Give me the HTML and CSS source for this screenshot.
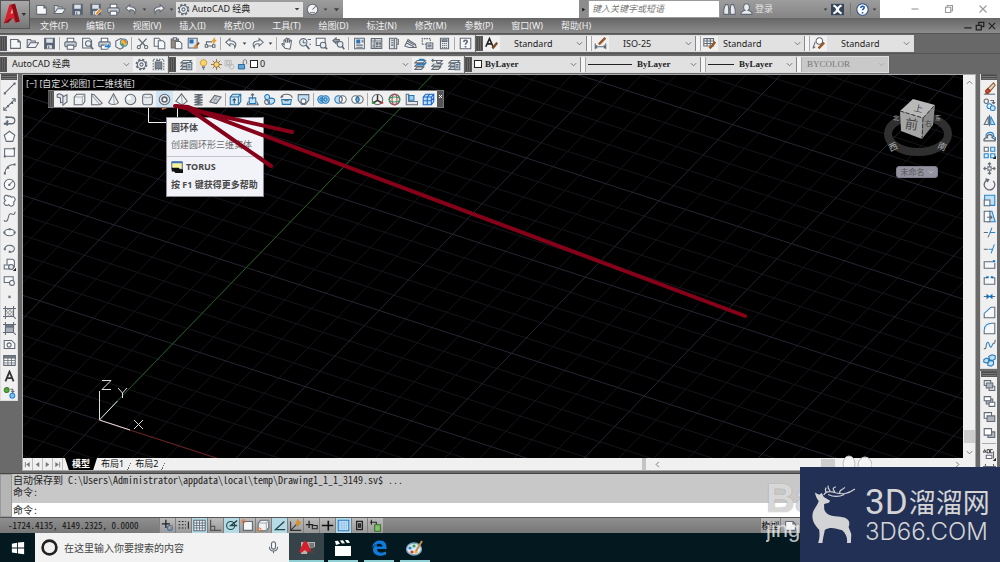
FILE: index.html
```html
<!DOCTYPE html>
<html lang="zh-CN">
<head>
<meta charset="utf-8">
<title>AutoCAD 经典</title>
<link rel="stylesheet" href="styles.css">
</head>
<body>
<svg class="defs" aria-hidden="true">
<symbol id="new" viewBox="0 0 16 16"><path fill="#f6f7f9" d="M2 3h9l3 3v8H2zM11 3v3h3"/></symbol>
<symbol id="open" viewBox="0 0 16 16"><path fill="#d5dae0" d="M1.500 13V3h4l1 2h5v3"/><path fill="#f2f4f6" d="M1.500 13l4-6h10l-4 6z"/></symbol>
<symbol id="save" viewBox="0 0 16 16"><path fill="#566275" d="M2 1.500h12v13H2z"/><path fill="#dce1e8" stroke="none" d="M4 2h8v5H4zM5 10h6v4H5z"/><path d="M7 11v3"/></symbol>
<symbol id="saveas" viewBox="0 0 16 16"><use href="#save"/><path stroke="#fff" stroke-width="4" d="M8 14l6-6"/><path stroke="#e08a2c" stroke-width="2.500" d="M9 14l5-6"/></symbol>
<symbol id="print" viewBox="0 0 16 16"><path fill="#fff" d="M4 6V1.500h8V6"/><rect x="1" y="6" width="14" height="6" rx="1.500" fill="#c8ced6"/><path fill="#fff" d="M4 10h8v5H4z"/></symbol>
<symbol id="preview" viewBox="0 0 16 16"><path fill="#f6f7f9" d="M2 1.500h8l3 3v9H2z"/><circle cx="9" cy="8" r="3.500" fill="#e7f1f8"/><path stroke-width="2" d="M11.500 11l3.500 4"/></symbol>
<symbol id="publish" viewBox="0 0 16 16"><use href="#print"/><path fill="#1b7fd0" stroke="#fff" stroke-width=".6" d="M8 10h4V7.500l4 4-4 4V13H8z"/></symbol>
<symbol id="print3d" viewBox="0 0 16 16"><path fill="#f0f2f4" d="M1 5l6-3 3 1v10l-4 2-5-3z"/><circle cx="11" cy="7" r="4.500" fill="#f3b53c" stroke="#3c8dcc"/><path stroke="#d73" stroke-width="2" d="M11 3l3 4"/><path stroke="#3ba35a" stroke-width="2" d="M8 8l3 3"/></symbol>
<symbol id="cut" viewBox="0 0 16 16"><path stroke-width="1.600" d="M3 2l8.500 9M13 2L4.500 11"/><circle cx="3.500" cy="12.500" r="2"/><circle cx="12.500" cy="12.500" r="2"/></symbol>
<symbol id="copy" viewBox="0 0 16 16"><path fill="#f6f7f9" d="M1.500 1.500H7l2 2v8H1.500z"/><path fill="#f6f7f9" d="M6.500 4.500H12l2.500 2.500v7.500h-8z"/></symbol>
<symbol id="paste" viewBox="0 0 16 16"><path fill="#9b8a72" d="M1.500 2.500h9v11h-9z"/><path fill="#dfe3e8" d="M4 1h4v3H4z"/><path fill="#f6f7f9" d="M6.500 5.500H12l2.500 2.500v6.500h-8z"/></symbol>
<symbol id="match" viewBox="0 0 16 16"><path fill="#d8e7f3" d="M1.500 1.500h11v12h-11z"/><path fill="#2d6cab" stroke="none" d="M3 3h5v5H3z"/><path stroke="#e08a2c" stroke-width="3" d="M9 13l3-3"/><path stroke="#7a4b20" stroke-width="2" d="M12 10l3-3"/></symbol>
<symbol id="block" viewBox="0 0 16 16"><path fill="#fff" d="M1.500 9.500h3v3h-3zM10.500 9.500h3v3h-3zM4.500 11h6M3 9V6h7"/><path fill="#f5a623" stroke="#d88a17" stroke-width=".7" d="M13 1l-3 4h2l-1 4 4-5h-2z"/></symbol>
<symbol id="undo" viewBox="0 0 16 16"><path fill="#f6f7f9" d="M6 2L1 6.500 6 11V8.500c4-.6 6 .8 6 4.500 3-4 1-8.500-6-8.500z"/></symbol>
<symbol id="redo" viewBox="0 0 16 16"><path fill="#f6f7f9" d="M10 2l5 4.500L10 11V8.500c-4-.6-6 .8-6 4.500-3-4-1-8.500 6-8.500z"/></symbol>
<symbol id="tri" viewBox="0 0 16 16"><path fill="#3a3f46" stroke="none" d="M2 5h12l-6 7z"/></symbol>
<symbol id="pan" viewBox="0 0 16 16"><path fill="#f6f7f9" d="M5 14C3 11 1 10 1 8.500c1-1 2 0 3 1L3.500 4c1-1.300 1.600 0 2 1L6 7V2c1-1.300 2-.5 2 .5V7l.5-4.500c1-1 2-.2 1.700.8L10 7l1.500-3c1.500-.5 1.500.7 1.200 1.700L12 11l-1 4z"/></symbol>
<symbol id="zoomrt" viewBox="0 0 16 16"><circle cx="6.500" cy="6.500" r="4.500" fill="#e6eef4"/><path stroke-width="2" d="M10 10l4 5"/><path d="M6.500 4v3h3M12 3h4M14 9h2"/></symbol>
<symbol id="zoomwin" viewBox="0 0 16 16"><path d="M1.500 1.500h11v9h-11z" fill="#f6f7f9"/><circle cx="10" cy="10" r="3.500" fill="#e6eef4"/><path stroke-width="2" d="M12.500 12.500L15 15"/></symbol>
<symbol id="zoomprev" viewBox="0 0 16 16"><path fill="#9aa1aa" d="M5 1L1 4.500 5 8V6h4V3H5z"/><circle cx="10" cy="9" r="3.500" fill="#e6eef4"/><path stroke-width="2" d="M12.500 11.500L15 15"/></symbol>
<symbol id="props" viewBox="0 0 16 16"><path fill="#f6f7f9" d="M2 1.500h12v13H2z"/><path fill="#3172b0" stroke="none" d="M4 3h5v5H4z"/><path d="M4 10h8M4 12.500h8M10.500 4H13M10.500 6H13"/></symbol>
<symbol id="grid" viewBox="0 0 16 16"><path fill="#f6f7f9" d="M1.500 2h13v12h-13z"/><path d="M1.500 5h13M1.500 8h13M1.500 11h13M6 2v12M10.500 2v12"/></symbol>
<symbol id="sgrid" viewBox="0 0 16 16"><path fill="#e6f3f8" d="M1 1.500h14v13H1z"/><path stroke-width="1" d="M1 5h14M1 8h14M1 11h14M4.500 2v12M8 2v12M11.500 2v12"/></symbol>
<symbol id="design" viewBox="0 0 16 16"><path fill="#f6f7f9" d="M1.500 2h13v12h-13z"/><path d="M6 2v12M1.500 5h13M3 7.500h2M3 10h2M3 12h2"/><path fill="#7b8591" d="M8 7h2v2H8zM12 7h1v2h-1zM8 11h2v1H8zM12 11h1v1h-1z"/></symbol>
<symbol id="palette" viewBox="0 0 16 16"><path fill="#dfe3e8" d="M3 1.500h9v13H3z"/><path d="M9 2v12M5 4h3M5 7h3M5 10h3M13 3h1v6h-2"/></symbol>
<symbol id="sheet" viewBox="0 0 16 16"><path fill="#e8ebee" d="M1 11l4-8 9 6 1 4H6zM3 7l9 5M4 5l9 5"/></symbol>
<symbol id="markup" viewBox="0 0 16 16"><path stroke-dasharray="2 1" d="M1.500 9V2h10v5M1.500 9H6"/><path fill="#dfe3e8" d="M6.500 7.500h8v7h-8zM8 10h5M8 12h5"/></symbol>
<symbol id="calc" viewBox="0 0 16 16"><path fill="#e8ebee" d="M3 1.500h10v13H3z"/><path fill="#9aa3ad" d="M5 3.500h6v2H5z"/><path stroke-dasharray="1.500 1" d="M5 8h6M5 10.500h6M5 13h6"/></symbol>
<symbol id="help" viewBox="0 0 16 16"><path fill="#f6f7f9" d="M1.500 1.500h13v13h-13z"/><path stroke-width="2" d="M6 6c0-3 4.500-2.500 4 0-.3 1.500-2 1.500-2 3.500M8 11v2"/></symbol>
<symbol id="gear" viewBox="0 0 16 16"><circle cx="8" cy="8" r="6" stroke-width="2.500" stroke-dasharray="2.700 2"/><circle cx="8" cy="8" r="5" fill="#f2f4f6"/><circle cx="8" cy="8" r="2"/></symbol>
<symbol id="wsave" viewBox="0 0 16 16"><path stroke-dasharray="2 1.500" d="M1.500 1.500h13v13h-13z"/><path fill="#7e8894" d="M4 5h8v8H4zM5 3h5"/></symbol>
<symbol id="layer" viewBox="0 0 16 16"><path fill="#eef0f2" d="M4 3h10l-3 3H1zM4 7h10l-3 3H1zM4 11h8l-3 3H1z"/></symbol>
<symbol id="layerprop" viewBox="0 0 16 16"><use href="#layer"/><path fill="#cfe4f5" d="M8.500 5.500h6v9h-6zM10 8h3M10 10h3M10 12h3"/></symbol>
<symbol id="layerblue" viewBox="0 0 16 16"><use href="#layer"/><path stroke="#2986cc" stroke-width="2" d="M3 8h9l3-3M6 2h7"/></symbol>
<symbol id="layerprev" viewBox="0 0 16 16"><use href="#layer"/><path fill="#f0f0f0" stroke="none" d="M0 0h7v7H0z"/><path d="M1 3h6v3M3 1L1 3l2 2"/></symbol>
<symbol id="bulb" viewBox="0 0 16 16"><path fill="#fbd36b" stroke="#c58b25" d="M6 10C1 6 4 1 8 1s7 5 2 9z"/><path stroke-width="2" d="M6 12h4M7 14.500h2"/></symbol>
<symbol id="sun" viewBox="0 0 16 16"><path stroke="#8d6a35" d="M8 0v16M0 8h16M2.500 2.500l11 11M13.500 2.500l-11 11"/><circle cx="8" cy="8" r="4" fill="#fbd36b" stroke="#8d6a35"/></symbol>
<symbol id="frozen" viewBox="0 0 16 16"><g stroke="#b5b5b5"><path d="M1.500 2h9v8h-9zM4 4h4v4H4z"/><circle cx="11" cy="11" r="3.500"/></g></symbol>
<symbol id="unlock" viewBox="0 0 16 16"><path d="M9 8V4c0-4 5-4 5 0v3"/><path fill="#5aa7dd" stroke="#24608d" d="M2 8h9v6.500H2z"/></symbol>
<symbol id="chev" viewBox="0 0 16 16"><path stroke-width="2" d="M2 5l6 6 6-6"/></symbol>
<symbol id="tstyle" viewBox="0 0 16 16"><path stroke="#222" stroke-width="2" d="M1 12L5.500 2 10 12M3 8.500h5"/><path stroke="#7a4b20" stroke-width="3" d="M9 14l2-2 4-5"/></symbol>
<symbol id="dstyle" viewBox="0 0 16 16"><path d="M1.500 8v7M14.500 8v7M2 12h12M4 10l-2 2 2 2M12 10l2 2-2 2"/><path stroke="#9a5626" stroke-width="3" d="M6 9l3-3 5-5"/></symbol>
<symbol id="tbstyle" viewBox="0 0 16 16"><path fill="#fff" d="M1 2h12v9H1zM1 5h12M1 8h12M5 2v9M9 2v9"/><path stroke="#9a5626" stroke-width="3" d="M8 14l3-3 4-5"/></symbol>
<symbol id="mlstyle" viewBox="0 0 16 16"><path fill="#fff" d="M1 14l3-8M1 14l3-2"/><circle cx="9" cy="5" r="4" fill="#fff"/><path stroke="#9a5626" stroke-width="3" d="M8 14l3-3 4-4"/></symbol>
<symbol id="line" viewBox="0 0 16 16"><path d="M2 14L14 2"/><path stroke-width="2.500" d="M1 14h2.500M13 2h2.500"/></symbol>
<symbol id="xline" viewBox="0 0 16 16"><path d="M1 15L15 1M1 11v4h4M11 1h4v4"/><path stroke-width="2.500" d="M5 10h2.500M10 6h2.500"/></symbol>
<symbol id="pline" viewBox="0 0 16 16"><path stroke-width="1.600" d="M4 4h6c6 0 6 8 0 8H2"/><path stroke-width="2.500" d="M3 4h2.500M1 12h2.500M6 8l-2 4 2 2"/></symbol>
<symbol id="polygon" viewBox="0 0 16 16"><path fill="#f8f9fa" d="M8 1.500l6.500 5L12 14H4L1.500 6.500z"/></symbol>
<symbol id="rect" viewBox="0 0 16 16"><path fill="#f8f9fa" d="M2 3.500h12v9H2z"/><path stroke-width="2.500" d="M1 13h2.500M12.500 3h2.500"/></symbol>
<symbol id="arc" viewBox="0 0 16 16"><path d="M2 14C3 8 7 3 14 3"/><path stroke-width="2.500" d="M1 14h2.500M5 7h2.500M13 3h2.500"/></symbol>
<symbol id="circle" viewBox="0 0 16 16"><circle cx="8" cy="8" r="6.500" fill="#f8f9fa"/><path d="M8 8l4-4"/><path stroke-width="2.500" d="M6.500 8.500H9"/></symbol>
<symbol id="cloud" viewBox="0 0 16 16"><path fill="#f8f9fa" d="M7 3c-5-4-7 2-4 5-4 3 0 8 4 5 3 4 8 1 6-3 4-3 1-8-3-6-1-2-2-2-3-1z"/></symbol>
<symbol id="spline" viewBox="0 0 16 16"><path d="M1 13c6 4 5-6 7-8s6 4 7-3"/></symbol>
<symbol id="ellipse" viewBox="0 0 16 16"><ellipse cx="8" cy="8" rx="6.500" ry="4" fill="#f8f9fa"/><path stroke-width="2.500" d="M.5 8H3M13 8h2.500M7 4h2.500"/></symbol>
<symbol id="ellarc" viewBox="0 0 16 16"><path d="M2 9c0-7 13-6 12 0-1 3-4 4-6 3"/><path stroke-width="2.500" d="M1 9h2.500M7 12h2.500"/></symbol>
<symbol id="insert" viewBox="0 0 16 16"><path fill="#f8f9fa" d="M5 1.500h7l2 2V11H5z"/><path fill="#f8f9fa" d="M1.500 8.500h6v5h-6z"/><circle cx="10" cy="11" r="3" fill="#e9ecef"/><path fill="#222" stroke="none" d="M16 12v4h-4z"/></symbol>
<symbol id="mkblock" viewBox="0 0 16 16"><path fill="#f8f9fa" d="M1.500 3.500h11v7h-11z"/><circle cx="11" cy="11" r="3" fill="#f8f9fa"/></symbol>
<symbol id="point" viewBox="0 0 16 16"><path fill="#778" stroke="none" d="M6.500 7h3v3h-3z"/></symbol>
<symbol id="hatch" viewBox="0 0 16 16"><path d="M3 0v16M13 0v13M0 3h16M0 13h13M12 12l4 4"/><path stroke-width=".8" d="M3 7l4-4M3 11l8-8M5 13l8-8M9 13l4-4M3 5l8 8M6 3l7 7"/></symbol>
<symbol id="gradient" viewBox="0 0 16 16"><path fill="#a9afb6" stroke="none" d="M3 3h10v10H3z"/><path fill="#6d757f" stroke="none" d="M3 3h10v4H3z"/><path d="M3 0v16M13 0v13M0 3h16M0 13h13M12 12l4 4"/></symbol>
<symbol id="region" viewBox="0 0 16 16"><path fill="#f8f9fa" d="M1.500 3h9l4 4v6h-13z"/><circle cx="7.500" cy="8.500" r="2.500"/></symbol>
<symbol id="table" viewBox="0 0 16 16"><path fill="#fff" d="M1 2h14v12H1z"/><path fill="#77808b" d="M1 2h14v3H1z"/><path stroke-width="1" d="M1 8h14M1 11h14M6 5v9M10.500 5v9"/></symbol>
<symbol id="text" viewBox="0 0 16 16"><path stroke="#333" stroke-width="2.200" d="M3 14L8 2l5 12M4.500 10h7"/></symbol>
<symbol id="addsel" viewBox="0 0 16 16"><circle cx="4.500" cy="5" r="3" fill="#58a63f" stroke="#3a7d27"/><circle cx="11.500" cy="12" r="3" fill="#79c2ef" stroke="#2986cc"/><path d="M9 4h3v4M10 6l2 2 2-2"/></symbol>
<symbol id="erase" viewBox="0 0 16 16"><path d="M1 15h14"/><path fill="#e8d9c4" stroke="#86562f" d="M6 8l7-7 2 3-6 7z"/><path fill="#c6502b" stroke="#963216" d="M6 8l3 3-3 3H4l-1-3z"/></symbol>
<symbol id="mcopy" viewBox="0 0 16 16"><circle cx="4" cy="4" r="2.700"/><path d="M9 3h4v4M11 5l2 2 2-2"/><g stroke="#2986cc"><circle cx="8" cy="10" r="3"/><circle cx="12" cy="12.500" r="3" fill="#cfe6f7"/></g></symbol>
<symbol id="mirror" viewBox="0 0 16 16"><path fill="#e9ecef" d="M6.500 3v10h-5z"/><path fill="#bfe0f7" stroke="#2986cc" d="M9.500 3v10h5z"/><path d="M8 1v14"/></symbol>
<symbol id="offset" viewBox="0 0 16 16"><path stroke="#2986cc" stroke-width="1.600" d="M4 9C2 2 14 0 13 8c3 1 3 3 2 4"/><path stroke-width="1.600" fill="#e9ecef" d="M1.500 13.500c-1-3 1-4 4-4-2-4 6-6 6-1-2 2 4 1 3.500 5z"/></symbol>
<symbol id="array" viewBox="0 0 16 16"><path fill="#fff" d="M1.500 1.500h5v5h-5z"/><path fill="#d6ebf9" stroke="#2986cc" d="M9.500 1.500h5v5h-5zM1.500 9.500h5v5h-5zM9.500 9.500h5v5h-5z"/><path fill="#222" stroke="none" d="M16 12v4h-4z"/></symbol>
<symbol id="move" viewBox="0 0 16 16"><path fill="#fff" d="M6 6h4v4H6z"/><path d="M8 1v4M8 11v4M1 8h4M11 8h4M6 3l2-2 2 2M6 13l2 2 2-2M3 6L1 8l2 2M13 6l2 2-2 2"/></symbol>
<symbol id="rotate" viewBox="0 0 16 16"><path stroke-width="1.600" d="M12.500 3.500A6.500 6.500 0 1 1 6 2M3 1l4 1-2 3"/></symbol>
<symbol id="scale" viewBox="0 0 16 16"><path fill="#bfe0f7" stroke="#2986cc" d="M2 1.500h12.500V14H2z"/><path fill="#f6f7f9" d="M1.500 7.500h7v7h-7z"/></symbol>
<symbol id="stretch" viewBox="0 0 16 16"><path fill="#bfe0f7" stroke="#2986cc" d="M8 1.500h3l4 13H6z"/><path fill="#f6f7f9" d="M1.500 1.500h7v13h-7z"/><path d="M5 9h6M9 7l2 2-2 2"/></symbol>
<symbol id="trim" viewBox="0 0 16 16"><path d="M1 8h5M6 14l2-4"/><path stroke="#2986cc" d="M8 8h7M8 10l3-8"/></symbol>
<symbol id="extend" viewBox="0 0 16 16"><path d="M1 9h5"/><path stroke="#2986cc" d="M7 9h5M10 14l4-11"/></symbol>
<symbol id="breakpt" viewBox="0 0 16 16"><path fill="#f6f7f9" d="M12 4.500H1.500v8h13V6"/><path stroke="#1270c0" stroke-width="2.500" d="M12 4h3"/></symbol>
<symbol id="break" viewBox="0 0 16 16"><path fill="#f6f7f9" d="M5 4.500H1.500v8h13v-8H11"/><path stroke="#1270c0" stroke-width="2.500" d="M4 4h3M9.500 4h3"/></symbol>
<symbol id="join" viewBox="0 0 16 16"><path d="M1 8h14"/><path fill="#1270c0" stroke="#1270c0" d="M5 6l2.500 2L5 10zM11 6L8.500 8l2.500 2z"/></symbol>
<symbol id="chamfer" viewBox="0 0 16 16"><path fill="#f6f7f9" d="M1.500 9v5.500h13v-13H10"/><path stroke="#2986cc" d="M1.500 9L10 1.500"/></symbol>
<symbol id="fillet" viewBox="0 0 16 16"><path fill="#f6f7f9" d="M1.500 10v4.500h13v-13H11"/><path stroke="#2986cc" d="M1.500 10c0-6 4-8.500 9.500-8.500"/></symbol>
<symbol id="blend" viewBox="0 0 16 16"><path d="M1 13c2 1 3-1 3-4M12 7c3 0 3-3 3-5"/><path stroke="#2986cc" d="M4 9c1-6 3-4 4 0s3 2 4-2"/></symbol>
<symbol id="explode" viewBox="0 0 16 16"><g fill="#bfe0f7" stroke="#2478b5"><path d="M1 7l3-2 3 1v4l-3 1-3-1zM7 3l4-2 4 1v4l-3 2-4-1zM6 10l3-2 4 1v4l-3 2-4-1z"/></g></symbol>
<symbol id="front" viewBox="0 0 16 16"><path fill="#fff" d="M1.500 2h8v6h-8zM7.500 9h7v5h-7z"/><path fill="#aeb4bb" d="M4 5h8v6H4z"/></symbol>
<symbol id="back" viewBox="0 0 16 16"><path fill="#aeb4bb" d="M4 5h8v6H4z"/><path fill="#fff" d="M1.500 2h8v5h-8zM7.500 9h7v5h-7z"/></symbol>
<symbol id="above" viewBox="0 0 16 16"><path fill="#fff" d="M1.500 2h9v7h-9z"/><path fill="#aeb4bb" d="M5 6h9.500v7H5z"/></symbol>
<symbol id="under" viewBox="0 0 16 16"><path fill="#aeb4bb" d="M6 6h8.500v7H6z"/><path fill="#fff" d="M1.500 2h9v8h-9z"/></symbol>
<symbol id="annot" viewBox="0 0 16 16"><path stroke="#222" stroke-width="1" d="M0 6l2-4 2 4M1 5h2M5 2v4h3V2zM12 2H9v4h3"/><path fill="#fff" d="M4 9h7v4H4zM13 4v9"/><path fill="#222" stroke="none" d="M16 12v4h-4z"/></symbol>
<symbol id="polysolid" viewBox="0 0 16 16"><path fill="#e3e7eb" d="M1.500 2l3-1 4 2v8l-3 1V6l-4-1zM8.500 5l5-3v9l-5 4z"/></symbol>
<symbol id="box" viewBox="0 0 16 16"><path fill="#eff1f3" d="M1.500 5l3-3.500h10v9l-3 4h-10z"/><path stroke="#a4abb3" d="M11.500 14V5h-9M11.500 5l3-3"/></symbol>
<symbol id="wedge" viewBox="0 0 16 16"><path fill="#eff1f3" d="M2 1.500v13h10l3-2L5 2z"/><path stroke="#a4abb3" d="M2.500 3l9.500 11"/></symbol>
<symbol id="cone" viewBox="0 0 16 16"><path fill="#eff1f3" d="M8 1l6 11c-3 3-9 3-12 0z"/><path stroke="#a4abb3" d="M8 3l1 11"/></symbol>
<symbol id="sphere" viewBox="0 0 16 16"><circle cx="8" cy="8" r="6.500" fill="#dfe4e9"/><circle cx="6" cy="6" r="2.500" fill="#fff" stroke="none"/></symbol>
<symbol id="cyl" viewBox="0 0 16 16"><rect x="2" y="1.500" width="12" height="13" rx="3" fill="#e7eaed"/><path stroke="#a4abb3" d="M3 4.500c3 1.500 7 1.500 10 0"/></symbol>
<symbol id="torus" viewBox="0 0 16 16"><circle cx="8" cy="8" r="6.500" fill="#e4e8ec"/><circle cx="8" cy="8" r="3" fill="#fff" stroke-width="2"/></symbol>
<symbol id="pyramid" viewBox="0 0 16 16"><path fill="#eff1f3" d="M8 1l7 9-6 5-8-5z"/><path stroke="#a4abb3" d="M8 3l1 11"/></symbol>
<symbol id="helix" viewBox="0 0 16 16"><path stroke-width="1.500" d="M3 2h10L3 5h10L3 8.500h10L3 11.500h10L3 14.500h10"/></symbol>
<symbol id="planar" viewBox="0 0 16 16"><path fill="#cdd1d6" d="M1 11l6-8 8 2-6 8z"/><path stroke="#8d959e" stroke-width="1" d="M4 7l8 2M10 4l-5 8"/></symbol>
<symbol id="extrude" viewBox="0 0 16 16"><path fill="#bfe0f7" stroke="#24719f" d="M1.500 5l3-3.500h10v9l-3 4h-10zM11.500 14V5h-10M11.500 5l3-3.500"/><path stroke="#1b4f74" d="M6.500 13V7M4.500 9l2-2 2 2"/></symbol>
<symbol id="presspull" viewBox="0 0 16 16"><path fill="#bfe0f7" stroke="#2478b5" d="M4 6h8v7H4z"/><path d="M1 14.500h14l-2-4M1 14.500l2-4M8 8V1M6 3l2-2 2 2"/></symbol>
<symbol id="sweep" viewBox="0 0 16 16"><path fill="#bfe0f7" stroke="#2478b5" d="M2 4c4-5 8 0 5 3 5-2 9 1 7 4s-6 4-7 1c-1-4-5-3-5-8z"/><circle cx="5" cy="11" r="3"/></symbol>
<symbol id="revolve" viewBox="0 0 16 16"><path fill="#bfe0f7" stroke="#2478b5" d="M2 8h12l-1 6H3z"/><path d="M1 6c1-6 13-6 14 0M1 6l3-2M5 8c0 2 6 2 6 0"/></symbol>
<symbol id="loft" viewBox="0 0 16 16"><path fill="#bfe0f7" d="M1.500 2h13v7L10 14H6L1.500 9z"/><circle cx="8" cy="10" r="3" fill="#fff"/></symbol>
<symbol id="union" viewBox="0 0 16 16"><g fill="#9fd1f3" stroke="#2478b5"><circle cx="5.500" cy="8" r="4.500"/><circle cx="10.500" cy="8" r="4.500"/></g><circle cx="5.500" cy="8" r="2" stroke="#2478b5"/><circle cx="10.500" cy="8" r="2" stroke="#2478b5"/></symbol>
<symbol id="subtract" viewBox="0 0 16 16"><circle cx="10.500" cy="8" r="4.500" fill="#fff"/><circle cx="5.500" cy="8" r="4.500" fill="#b9def6" stroke="#2478b5"/><path fill="#fff" d="M8.500 4.200a4.500 4.500 0 0 0 0 7.600c2-2 2-5.600 0-7.600z"/></symbol>
<symbol id="intersect" viewBox="0 0 16 16"><circle cx="5.500" cy="8" r="4.500" fill="#fff"/><circle cx="10.500" cy="8" r="4.500"/><path fill="#62b1e6" stroke="#2478b5" d="M8 4.500c2 2 2 5 0 7-2-2-2-5 0-7z"/></symbol>
<symbol id="move3d" viewBox="0 0 16 16"><circle cx="8" cy="8" r="6.500"/><path stroke-width="1.800" stroke="#333" d="M8 2v7l-5 3M8 9l5 3"/><path stroke-width="2.500" stroke="#c33" d="M12 12h3"/><path stroke-width="2.500" stroke="#292" d="M1 12h3"/></symbol>
<symbol id="rot3d" viewBox="0 0 16 16"><circle cx="8" cy="8" r="6.500" stroke-width="1.800"/><ellipse cx="8" cy="8" rx="3" ry="6.500" stroke="#c44"/><ellipse cx="8" cy="8" rx="6.500" ry="3" stroke="#3a9a5b"/></symbol>
<symbol id="align3d" viewBox="0 0 16 16"><path fill="#e4e8ec" d="M1.500 1.500h3v9h11v4h-14z"/><path fill="#9fd1f3" stroke="#2478b5" d="M5 3h6v6H5z"/></symbol>
<symbol id="array3d" viewBox="0 0 16 16"><path fill="#bfe0f7" stroke="#1e66c4" d="M1.500 5l3-3.500h10v9l-3 4h-10zM1.500 5h10v9M11.500 5l3-3.500M1.500 9.500h10l3-4M6.500 14V5l3-3.500"/></symbol>
<symbol id="target" viewBox="0 0 16 16"><path stroke="#222" stroke-width="1.600" d="M6 1v10M1 6h10"/><circle cx="11" cy="11" r="3" stroke="#2a6fb8"/><path stroke="#d74" d="M11 13l3-6"/></symbol>
<symbol id="snap" viewBox="0 0 16 16"><path stroke="#222" stroke-dasharray="2 2" d="M2 3h9M2 7h9M2 11h9"/><path stroke="#222" d="M14 3v9"/></symbol>
<symbol id="ortho" viewBox="0 0 16 16"><path stroke="#555" stroke-width="1.500" d="M2 1v13h13M2 9h5v5"/></symbol>
<symbol id="polar" viewBox="0 0 16 16"><circle cx="7" cy="8" r="5" stroke="#244"/><path stroke="#244" stroke-width="1.600" d="M15 2L7 8h8"/></symbol>
<symbol id="osnap" viewBox="0 0 16 16"><path fill="#f6f7f9" d="M3 3h11v11H3z"/><circle cx="3" cy="3" r="2" stroke="#e07a3c"/></symbol>
<symbol id="osnap3" viewBox="0 0 16 16"><use href="#box"/><circle cx="3" cy="13" r="2" stroke="#e07a3c"/></symbol>
<symbol id="otrack" viewBox="0 0 16 16"><path stroke="#244" stroke-width="1.600" d="M14 3L3 13h12"/></symbol>
<symbol id="ducs" viewBox="0 0 16 16"><path stroke="#333" d="M2 3v11h13M2 14l7-7"/><path fill="#f5a623" stroke="#d88a17" d="M11 1l-2 4h2l-1 4 4-5h-2z"/></symbol>
<symbol id="dyn" viewBox="0 0 16 16"><path stroke="#222" stroke-width="1.600" d="M5 2v9M1 7h9"/><path stroke="#222" d="M9 8h6v4H9z"/></symbol>
<symbol id="lwt" viewBox="0 0 16 16"><path stroke="#111" stroke-width="2" d="M9 2v12M1 8h14"/></symbol>
<symbol id="tpy" viewBox="0 0 16 16"><path fill="#bfe0f7" stroke="#2a78c0" d="M1.500 1.500h13v13h-13z"/><path stroke="#7db4e0" stroke-dasharray="1 1" d="M3 4h10M3 6h10M3 8h10M3 10h10M3 12h10"/></symbol>
<symbol id="qp" viewBox="0 0 16 16"><path stroke="#222" stroke-width="1.600" d="M4.500 3h7v10h-7zM7 6h2v4H7z"/></symbol>
<symbol id="sc" viewBox="0 0 16 16"><path stroke="#222" d="M3 1v6M1 4h8v3"/><path fill="#83c06d" stroke="#387127" d="M7 7h7v8H7z"/></symbol>
<symbol id="nfirst" viewBox="0 0 16 16"><path fill="#777" stroke="none" d="M2 2h2v12H2zM13 2v12L5 8z"/></symbol>
<symbol id="nprev" viewBox="0 0 16 16"><path fill="#777" stroke="none" d="M12 2v12L4 8z"/></symbol>
</svg>

<header class="titlebar">
  <button class="applogo" aria-label="应用程序菜单"><svg viewBox="0 0 30 29"><path fill="#d3202c" stroke="none" d="M3 24L9 4l6-1 5 19-5 1-2-5-4 1-1 4z"/><path fill="#8c0e18" stroke="none" d="M11 4l4-1 5 19-4 1zM3 24l6-5 4-1-5 5z"/><path fill="#f6a5a5" stroke="none" d="M10 14l2-6 1 5z"/><path fill="#333" stroke="none" d="M22 13h5l-2.500 3z"/></svg></button>
  <div class="qat">
    <button aria-label="新建"><svg><use href="#new"/></svg></button><button aria-label="打开"><svg><use href="#open"/></svg></button><button aria-label="保存"><svg><use href="#save"/></svg></button><button aria-label="另存为"><svg><use href="#saveas"/></svg></button><button aria-label="打印"><svg><use href="#print"/></svg></button><button aria-label="放弃"><svg><use href="#undo"/></svg></button><button class="drop" aria-label="放弃列表"><svg><use href="#tri"/></svg></button><button aria-label="重做"><svg><use href="#redo"/></svg></button><button class="drop" aria-label="重做列表"><svg><use href="#tri"/></svg></button>
    <label class="wsbox"><svg><use href="#gear"/></svg><select aria-label="工作空间"><option>AutoCAD 经典</option></select><svg class="tiny"><use href="#tri"/></svg></label>
    <button aria-label="渲染"><svg viewBox="0 0 16 16"><circle cx="8" cy="8" r="6.500" fill="#f2f2f2"/><path d="M8 8l4-4M5 12h6"/></svg></button><button class="drop" aria-label="更多"><svg><use href="#tri"/></svg></button><button class="drop dark" aria-label="自定义"><svg><use href="#tri"/></svg></button>
  </div>
  <div class="search"><button class="drop" aria-label="展开"><svg viewBox="0 0 16 16"><path fill="#111" stroke="none" d="M4 2l9 6-9 6z"/></svg></button><input aria-label="搜索" placeholder="键入关键字或短语"></div>
  <div class="account">
    <button aria-label="查找"><svg viewBox="0 0 16 16"><path fill="#e8ecf0" d="M3 2h3l1 4v8H1V8zM10 2h3l2 6v6H9V6zM7 7h2"/></svg></button>
    <button class="login"><svg viewBox="0 0 16 16"><path fill="#e8ecf0" d="M8 1c5 0 4 7 2 8 3 1 5 2 5 5H1c0-3 2-4 5-5C4 8 3 1 8 1z"/></svg>登录</button>
    <button class="drop" aria-label="登录菜单"><svg><use href="#tri"/></svg></button>
    <button aria-label="Exchange"><svg viewBox="0 0 16 16"><path fill="#34445a" stroke="none" d="M0 1h16v14H0z"/><path stroke="#fff" stroke-width="2.500" d="M3 3c6 3 6 7 0 10M13 3c-6 3-6 7 0 10"/></svg></button><i></i>
    <button aria-label="帮助"><svg viewBox="0 0 16 16"><circle cx="8" cy="8" r="7" fill="#fff" stroke="#2a4f8c"/><path stroke="#1d57b5" stroke-width="2" d="M6 6c0-3 4.500-2.500 4 0-.3 1.500-2 1.500-2 3M8 11v2"/></svg></button><button class="drop" aria-label="帮助菜单"><svg><use href="#tri"/></svg></button>
  </div>
  <div class="winbtns"><button aria-label="最小化"><svg viewBox="0 0 16 16"><path d="M4 8h8"/></svg></button><button aria-label="还原"><svg viewBox="0 0 16 16"><path d="M4 6h6v6H4zM6 6V4h6v6h-2"/></svg></button><button aria-label="关闭"><svg viewBox="0 0 16 16"><path d="M4 4l8 8M12 4l-8 8"/></svg></button></div>
</header>

<nav class="menubar">
  <button>文件(F)</button><button>编辑(E)</button><button>视图(V)</button><button>插入(I)</button><button>格式(O)</button><button>工具(T)</button><button>绘图(D)</button><button>标注(N)</button><button>修改(M)</button><button>参数(P)</button><button>窗口(W)</button><button>帮助(H)</button>
  <div class="mdi"><button aria-label="最小化图形"><svg viewBox="0 0 16 16"><path d="M2 11h12"/></svg></button><button aria-label="还原图形"><svg viewBox="0 0 16 16"><path d="M2 7h8v7H2zM6 6V2h8v7h-3"/></svg></button><button aria-label="关闭图形"><svg viewBox="0 0 16 16"><path d="M3 3l10 10M13 3L3 13"/></svg></button></div>
</nav>

<div class="row row-a">
  <div class="bar"><b class="grip"></b>
    <button aria-label="新建"><svg><use href="#new"/></svg></button><button aria-label="打开"><svg><use href="#open"/></svg></button><button aria-label="保存"><svg><use href="#save"/></svg></button><i></i>
    <button aria-label="打印"><svg><use href="#print"/></svg></button><button aria-label="预览"><svg><use href="#preview"/></svg></button><button aria-label="发布"><svg><use href="#publish"/></svg></button><button aria-label="三维打印"><svg><use href="#print3d"/></svg></button><i></i>
    <button aria-label="剪切"><svg><use href="#cut"/></svg></button><button aria-label="复制"><svg><use href="#copy"/></svg></button><button aria-label="粘贴"><svg><use href="#paste"/></svg></button><button aria-label="特性匹配"><svg><use href="#match"/></svg></button><button aria-label="块编辑器"><svg><use href="#block"/></svg></button><i></i>
    <button aria-label="放弃"><svg><use href="#undo"/></svg></button><button class="drop" aria-label="放弃列表"><svg><use href="#tri"/></svg></button><button aria-label="重做"><svg><use href="#redo"/></svg></button><button class="drop" aria-label="重做列表"><svg><use href="#tri"/></svg></button><i></i>
    <button aria-label="平移"><svg><use href="#pan"/></svg></button><button aria-label="实时缩放"><svg><use href="#zoomrt"/></svg></button><button aria-label="窗口缩放"><svg><use href="#zoomwin"/></svg></button><button aria-label="缩放上一个"><svg><use href="#zoomprev"/></svg></button><i></i>
    <button aria-label="特性"><svg><use href="#props"/></svg></button><button aria-label="设计中心"><svg><use href="#design"/></svg></button><button aria-label="工具选项板"><svg><use href="#palette"/></svg></button><button aria-label="图纸集"><svg><use href="#sheet"/></svg></button><button aria-label="标记集"><svg><use href="#markup"/></svg></button><button aria-label="计算器"><svg><use href="#calc"/></svg></button><i></i>
    <button aria-label="帮助"><svg><use href="#help"/></svg></button>
  </div>
  <div class="bar"><b class="grip"></b>
    <button aria-label="文字样式"><svg><use href="#tstyle"/></svg></button><span class="combo w86 in"><select aria-label="文字样式选择"><option>Standard</option></select><svg><use href="#chev"/></svg></span><u></u>
    <button aria-label="标注样式"><svg><use href="#dstyle"/></svg></button><span class="combo w86 in"><select aria-label="标注样式选择"><option>ISO-25</option></select><svg><use href="#chev"/></svg></span><u></u>
    <button aria-label="表格样式"><svg><use href="#tbstyle"/></svg></button><span class="combo w86"><select aria-label="表格样式选择"><option>Standard</option></select><svg><use href="#chev"/></svg></span><u></u>
    <button aria-label="多重引线样式"><svg><use href="#mlstyle"/></svg></button><span class="combo w86 in"><select aria-label="引线样式选择"><option>Standard</option></select><svg><use href="#chev"/></svg></span>
  </div>
</div>

<div class="row row-b">
  <div class="bar"><b class="grip"></b>
    <span class="combo w126"><select aria-label="工作空间列表"><option>AutoCAD 经典</option></select><svg><use href="#chev"/></svg></span><button aria-label="工作空间设置"><svg><use href="#gear"/></svg></button><button aria-label="保存工作空间"><svg><use href="#wsave"/></svg></button>
  </div>
  <div class="bar"><b class="grip"></b>
    <button class="wide" aria-label="图层特性"><svg><use href="#layerprop"/></svg></button>
    <span class="combo w216 layers"><select aria-label="图层"><option>0</option></select><span class="states"><svg><use href="#bulb"/></svg><svg><use href="#sun"/></svg><svg><use href="#frozen"/></svg><svg><use href="#unlock"/></svg><em class="swatch"></em></span><svg><use href="#chev"/></svg></span>
    <button aria-label="置为当前"><svg><use href="#layerblue"/></svg></button><button aria-label="上一个图层"><svg><use href="#layerprev"/></svg></button><button aria-label="图层状态"><svg><use href="#layerprop"/></svg></button>
  </div>
  <div class="bar serif"><b class="grip"></b>
    <span class="combo w108 sw"><select aria-label="颜色"><option>ByLayer</option></select><span class="states"><em class="swatch"></em></span><svg><use href="#chev"/></svg></span><u></u>
    <span class="combo w116 ln"><select aria-label="线型"><option>ByLayer</option></select><span class="states"><em class="stroke"></em></span><svg><use href="#chev"/></svg></span><u></u>
    <span class="combo w90 ls"><select aria-label="线宽"><option>ByLayer</option></select><span class="states"><em class="stroke short"></em></span><svg><use href="#chev"/></svg></span><u></u>
    <span class="combo w86 off"><select aria-label="打印样式" disabled><option>BYCOLOR</option></select><svg><use href="#chev"/></svg></span>
  </div>
</div>

<main class="work">
  <aside class="vbar"><b class="grip"></b>
    <button aria-label="直线"><svg><use href="#line"/></svg></button><button aria-label="构造线"><svg><use href="#xline"/></svg></button><button aria-label="多段线"><svg><use href="#pline"/></svg></button><button aria-label="多边形"><svg><use href="#polygon"/></svg></button><button aria-label="矩形"><svg><use href="#rect"/></svg></button><button aria-label="圆弧"><svg><use href="#arc"/></svg></button><button aria-label="圆"><svg><use href="#circle"/></svg></button><button aria-label="修订云线"><svg><use href="#cloud"/></svg></button><button aria-label="样条曲线"><svg><use href="#spline"/></svg></button><button aria-label="椭圆"><svg><use href="#ellipse"/></svg></button><button aria-label="椭圆弧"><svg><use href="#ellarc"/></svg></button><button aria-label="插入块"><svg><use href="#insert"/></svg></button><button aria-label="创建块"><svg><use href="#mkblock"/></svg></button><button aria-label="点"><svg><use href="#point"/></svg></button><button aria-label="图案填充"><svg><use href="#hatch"/></svg></button><button aria-label="渐变色"><svg><use href="#gradient"/></svg></button><button aria-label="面域"><svg><use href="#region"/></svg></button><button aria-label="表格"><svg><use href="#table"/></svg></button><button aria-label="多行文字"><svg><use href="#text"/></svg></button><button aria-label="添加选定对象"><svg><use href="#addsel"/></svg></button>
  </aside>

  <section class="frame">
    <div class="view">
      <svg class="scene" aria-hidden="true"><g transform="translate(-23 -75)">
        <path id="minor" stroke="#15151b"/><path id="major" stroke="#262633"/>
        <path stroke="#1c5a1c" d="M99 420L446 61"/><path stroke="#6b1c1c" d="M99 420l151 49"/>
        <path stroke="#ddd" d="M99.500 391v29l30.500 10M99.500 420l18-19M102 380.500h9l-9 9h9M118 388l4.500 5v5M127 388l-4.500 5M134 420l9 9M143 420l-9 9"/>
        <path stroke="#eee" d="M148.500 106v16.500h29V108"/><path stroke="#d06a35" stroke-width="2" d="M162 109l5-2"/>
        <ellipse cx="918" cy="134" rx="30" ry="18" stroke="#2f2f2f" stroke-width="8"/>
        <path fill="#b9b9b9" stroke="none" d="M900 111l13-12 22 6-12 13z"/><path fill="#a5a5a5" stroke="none" d="M900 111l23 7-1 21-21-8z"/><path fill="#8b8b8b" stroke="none" d="M923 118l12-13-2 20-11 14z"/>
        <path stroke="#333" stroke-dasharray="4 2" d="M900 111l23 7 12-13M923 118l-1 21"/>
        <text x="905" y="129" class="face" transform="rotate(8 912 125)">前</text><text x="914" y="112" class="face f8" transform="rotate(12 919 108)">上</text><text x="925" y="126" class="face f6">右</text>
        <text x="888" y="150" class="dir" transform="rotate(-25 893 146)">西</text><text x="938" y="150" class="dir" transform="rotate(25 943 146)">南</text><text x="893" y="120" class="dir d7">北</text><text x="935" y="120" class="dir d7">东</text>
      </g></svg>
      <p class="viewlabel">[−] [自定义视图] [二维线框]</p>
      <button class="ucs">未命名 <svg><use href="#chev"/></svg></button>
      <div class="float"><b class="grip"></b>
        <button aria-label="多段体"><svg><use href="#polysolid"/></svg></button><button aria-label="长方体"><svg><use href="#box"/></svg></button><button aria-label="楔体"><svg><use href="#wedge"/></svg></button><button aria-label="圆锥体"><svg><use href="#cone"/></svg></button><button aria-label="球体"><svg><use href="#sphere"/></svg></button><button aria-label="圆柱体"><svg><use href="#cyl"/></svg></button><button class="hot" aria-label="圆环体"><svg><use href="#torus"/></svg></button><button aria-label="棱锥体"><svg><use href="#pyramid"/></svg></button><button aria-label="螺旋"><svg><use href="#helix"/></svg></button><button aria-label="平面曲面"><svg><use href="#planar"/></svg></button><i></i>
        <button aria-label="拉伸"><svg><use href="#extrude"/></svg></button><button aria-label="按住并拖动"><svg><use href="#presspull"/></svg></button><button aria-label="扫掠"><svg><use href="#sweep"/></svg></button><button aria-label="旋转"><svg><use href="#revolve"/></svg></button><button aria-label="放样"><svg><use href="#loft"/></svg></button><i></i>
        <button aria-label="并集"><svg><use href="#union"/></svg></button><button aria-label="差集"><svg><use href="#subtract"/></svg></button><button aria-label="交集"><svg><use href="#intersect"/></svg></button><i></i>
        <button aria-label="三维移动"><svg><use href="#move3d"/></svg></button><button aria-label="三维旋转"><svg><use href="#rot3d"/></svg></button><button aria-label="三维对齐"><svg><use href="#align3d"/></svg></button><button aria-label="三维阵列"><svg><use href="#array3d"/></svg></button>
        <button class="close" aria-label="关闭工具栏"><svg viewBox="0 0 16 16"><path stroke="#fff" stroke-width="3" d="M3 3l10 10M13 3L3 13"/></svg></button>
      </div>
      <div class="tip" role="tooltip">
        <strong>圆环体</strong><p>创建圆环形三维实体</p><hr>
        <strong class="cmd"><svg viewBox="0 0 16 16"><path fill="#f7f39a" stroke="#4466a0" d="M1 1h14v10H1z"/><path fill="#3f6fc0" stroke="none" d="M1 1h14v2H1z"/><path fill="#111" stroke="none" d="M1 9h9l2 2h4v5H6l-2-2H1z"/></svg>TORUS</strong><strong>按 F1 键获得更多帮助</strong>
      </div>
      <svg class="marks" aria-hidden="true"><g transform="translate(-23 -75)"><path d="M175 106l13 1L745 316M176 106l116 26M186 107l85 59"/></g></svg>
    </div>
    <div class="vscroll"><svg class="up"><use href="#chev"/></svg><span></span><svg><use href="#chev"/></svg></div>
    <div class="tabs">
      <button class="nav" aria-label="第一个"><svg><use href="#nfirst"/></svg></button><button class="nav" aria-label="上一个"><svg><use href="#nprev"/></svg></button><button class="nav flip" aria-label="下一个"><svg><use href="#nprev"/></svg></button><button class="nav flip" aria-label="最后一个"><svg><use href="#nfirst"/></svg></button>
      <button class="tab on">模型</button><button class="tab">布局1</button><button class="tab">布局2</button>
      <div class="hscroll"><svg class="prev"><use href="#chev"/></svg><span></span><svg class="next"><use href="#chev"/></svg></div>
    </div>
  </section>

  <aside class="right">
    <div class="vbar"><b class="grip"></b>
      <button aria-label="删除"><svg><use href="#erase"/></svg></button><button aria-label="复制对象"><svg><use href="#mcopy"/></svg></button><button aria-label="镜像"><svg><use href="#mirror"/></svg></button><button aria-label="偏移"><svg><use href="#offset"/></svg></button><button aria-label="阵列"><svg><use href="#array"/></svg></button><button aria-label="移动"><svg><use href="#move"/></svg></button><button aria-label="旋转对象"><svg><use href="#rotate"/></svg></button><button aria-label="缩放"><svg><use href="#scale"/></svg></button><button aria-label="拉伸对象"><svg><use href="#stretch"/></svg></button><button aria-label="修剪"><svg><use href="#trim"/></svg></button><button aria-label="延伸"><svg><use href="#extend"/></svg></button><button aria-label="打断于点"><svg><use href="#breakpt"/></svg></button><button aria-label="打断"><svg><use href="#break"/></svg></button><button aria-label="合并"><svg><use href="#join"/></svg></button><button aria-label="倒角"><svg><use href="#chamfer"/></svg></button><button aria-label="圆角"><svg><use href="#fillet"/></svg></button><button aria-label="光顺曲线"><svg><use href="#blend"/></svg></button><button aria-label="分解"><svg><use href="#explode"/></svg></button>
    </div>
    <div class="vbar"><b class="grip"></b>
      <button aria-label="前置"><svg><use href="#front"/></svg></button><button aria-label="后置"><svg><use href="#back"/></svg></button><button aria-label="置于对象之上"><svg><use href="#above"/></svg></button><button aria-label="置于对象之下"><svg><use href="#under"/></svg></button><i></i><button aria-label="注释前置"><svg><use href="#annot"/></svg></button><button aria-label="图案填充后置"><svg><use href="#gradient"/></svg></button>
    </div>
  </aside>
</main>

<section class="command">
  <b class="grip"></b>
  <div class="lines"><p>自动保存到 C:\Users\Administrator\appdata\local\temp\Drawing1_1_1_3149.sv$ ...</p><p>命令:</p></div>
  <label class="prompt">命令: <input aria-label="命令行"></label>
</section>

<footer class="status">
  <span class="coords">-1724.4135, 4149.2325, 0.0000</span>
  <button aria-label="推断约束"><svg><use href="#target"/></svg></button><button aria-label="捕捉"><svg><use href="#snap"/></svg></button><button class="on" aria-label="栅格"><svg><use href="#sgrid"/></svg></button><button aria-label="正交"><svg><use href="#ortho"/></svg></button><button class="on" aria-label="极轴"><svg><use href="#polar"/></svg></button><button aria-label="对象捕捉"><svg><use href="#osnap"/></svg></button><button aria-label="三维对象捕捉"><svg><use href="#osnap3"/></svg></button><button class="on" aria-label="对象追踪"><svg><use href="#otrack"/></svg></button><button aria-label="动态 UCS"><svg><use href="#ducs"/></svg></button><button aria-label="动态输入"><svg><use href="#dyn"/></svg></button><button aria-label="线宽显示"><svg><use href="#lwt"/></svg></button><button class="on" aria-label="透明度"><svg><use href="#tpy"/></svg></button><button aria-label="快捷特性"><svg><use href="#qp"/></svg></button><button aria-label="选择循环"><svg><use href="#sc"/></svg></button>
  <div class="space"><button>模型</button><button aria-label="图纸"><svg><use href="#new"/></svg></button></div>
</footer>

<footer class="taskbar">
  <button class="start" aria-label="开始"><svg viewBox="0 0 16 16"><path fill="#fff" stroke="none" d="M1 3l6-1v5.500H1zM8 1.800L15 1v6.500H8zM1 8.500h6V14l-6-1zM8 8.500h7V15l-7-.8z"/></svg></button>
  <label class="find"><svg class="ring" viewBox="0 0 16 16"><circle cx="8" cy="8" r="6.500" stroke="#222" stroke-width="2.500"/></svg><input aria-label="任务栏搜索" placeholder="在这里输入你要搜索的内容"><svg class="mic" viewBox="0 0 16 16"><rect x="5.500" y="1" width="5" height="9" rx="2.500"/><path d="M3 7c0 7 10 7 10 0M8 12v3"/></svg></label>
  <button class="app big" aria-label="AutoCAD"><svg viewBox="0 0 20 16"><path fill="#b5b5b5" stroke="none" d="M4 2h14v12H4z"/><path fill="#444" stroke="none" d="M11 9l7-2v7h-8z"/><path fill="#777" stroke="none" d="M12 3h5v4l-4 1z"/><path fill="#d3202c" stroke="none" d="M2 12L7 1l3 1 4 9-4 1-2-2-4 3z"/></svg></button>
  <button class="app" aria-label="视频"><svg viewBox="0 0 20 16"><path fill="#fff" stroke="none" d="M2 6h16v10H2zM2 1l3-.3 2 3L3 5zM7 .5l3-.2 2 3-3 .3zM12 0l3-.2 2 3-3 .3z"/></svg></button>
  <button class="app" aria-label="Edge"><svg viewBox="0 0 20 16"><path fill="#0f7bdc" stroke="none" d="M3 8C4 2 8 0.500 11 .5c5 0 6.500 3.500 6.500 7.500v1H8c0 4 5 4.500 9 2.500v3C10 17.500 4 15 4 9.500 4 7 6 5 8.500 4c-1 1-1 1.500-.7 2.500h5.700c0-4-7-3.500-10.500 1.500z"/></svg></button>
  <button class="app" aria-label="画图"><svg viewBox="0 0 20 16"><ellipse cx="9" cy="9" rx="7.500" ry="6" fill="#d9e8f2" stroke="#78a3bd"/><g stroke="none"><circle cx="5" cy="8" r="1.600" fill="#2d7fd2"/><circle cx="9" cy="6" r="1.600" fill="#3aa655"/><circle cx="7" cy="12" r="1.600" fill="#d43a2f"/><circle cx="11" cy="12" r="1.600" fill="#efb52c"/></g><path stroke="#c98a4b" stroke-width="2" d="M11 11l6-10"/></svg></button>
</footer>

<div class="ghost" aria-hidden="true"><b>Ba</b><span>jing</span></div>
<svg class="paw" viewBox="0 0 32 12" aria-hidden="true"><ellipse cx="9" cy="9" rx="6" ry="8"/><ellipse cx="25" cy="10" rx="7" ry="8"/></svg>
<aside class="brand">
  <svg viewBox="30 40 140 200" aria-hidden="true"><path fill="#d2d3d4" stroke="none" d="M44 74l13 7 8-5 6 12 19 11-4 6-14 4c0 9-1 18 5 24 10 13 32 11 50 15 18 3 24 14 18 29l8 21-1 27h-12c2-12 0-25-14-38-22-7-36-11-52-1-2 14-6 23-7 39H54c5-14 5-27 3-40-14-14-23-30-19-49 3-14 15-23 18-36-5-7-9-12-12-29z"/><path stroke="#d2d3d4" stroke-width="3.500" d="M71 82c7-14 20-12 35-7 22 6 37 4 58-11M78 75c-3-7-4-10 0-15M90 70c-6-8-8-9-6-16M104 72c-9-9-5-12 3-15M119 77c-4-10 5-8 15-18M84 80c20 10 34 7 48 0"/></svg>
  <div><p class="name"><span>3D</span>溜溜网</p><p class="site">3D66.COM</p></div>
</aside>
<script src="grid.js"></script>
</body>
</html>
```
FILE: styles.css
```css
* { box-sizing: border-box; margin: 0; }
html, body { height: 100%; }
body {
  display: flex; flex-direction: column; min-height: 100vh; overflow: hidden; position: relative;
  background: #666; color: #222;
  font: 9px/12px "Noto Sans", "Noto Sans CJK SC", sans-serif;
}
button, input, select { font: inherit; color: inherit; border: 0; padding: 0; background: none; border-radius: 0; outline: 0; min-width: 0; }
button { display: flex; align-items: center; justify-content: center; flex: none; }
svg { fill: none; stroke: #616a75; stroke-width: 1.3; width: 13px; height: 13px; flex: none; display: block; }
.defs { position: absolute; width: 0; height: 0; }
select { appearance: none; width: 100%; opacity: 1; }

.titlebar { display: flex; height: 18px; background: #fff; flex: none; }
.applogo { width: 30px; height: 29px; background: linear-gradient(#a9a9a9, #777); border: 1px solid #555; position: relative; z-index: 2; }
.applogo svg { width: 28px; height: 27px; }
.qat, .account { display: flex; align-items: center; background: linear-gradient(#9d9d9d, #858585); }
.qat { width: 313px; padding-left: 2px; }
.qat > button { width: 18px; }
.qat > .drop, .drop { width: 9px; }
.drop svg { width: 5px; height: 5px; }
.qat > .dark { width: 13px; }
.dark svg { width: 7px; height: 7px; }
.wsbox { display: flex; align-items: center; gap: 2px; width: 128px; height: 15px; background: #e2e2e2; padding: 0 3px 0 1px; }
.wsbox .tiny { width: 6px; height: 6px; }
.search { display: flex; margin-left: auto; width: 141px; background: #8c8c8c; }
.search input { flex: 1; background: #fff; font-style: italic; padding-left: 3px; border: 1px solid #999; }
.search input::placeholder { color: #777; opacity: 1; }
.account { width: 160px; padding: 0 1px 0 2px; color: #e4e4e4; }
.account > button { width: 15px; }
.account > .login { width: 50px; gap: 2px; justify-content: flex-start; padding-left: 3px; margin-right: auto; }
.account > .drop { width: 9px; }
.account i { width: 1px; height: 12px; background: #777; margin: 0 4px 0 5px; }
.winbtns { display: flex; width: 120px; padding-left: 18px; }
.winbtns button { flex: 1; }
.winbtns svg { stroke: #9a9a9a; width: 14px; height: 14px; }

.menubar { display: flex; align-items: center; gap: 18px; height: 15px; flex: none; padding: 0 3px 0 40px; background: linear-gradient(#666, #8c8c8c); color: #f0f0f0; }
.mdi { display: flex; gap: 2px; margin-left: auto; }
.mdi svg { width: 10px; height: 10px; stroke: #222; stroke-width: 2; }

.row { display: flex; flex: none; height: 20px; align-items: center; gap: 1px; background: #686868; border-top: 1px solid #555; }
.bar { display: flex; align-items: center; height: 17px; background: #f0f0f0; border: 1px solid #ddd; border-left: 0; }
.grip { flex: none; width: 7px; align-self: stretch; background: repeating-linear-gradient(90deg, #4a4a4a 0 1px, #666 1px 2px); border: 1px solid #5a5a5a; }
.bar > button { width: 17px; height: 15px; }
.bar > .drop { width: 9px; }
.bar > i, .float > i { width: 1px; height: 13px; background: #aaa; margin: 0 1px; }
.bar > i { margin-right: 2px; }
.bar > u { width: 6px; height: 15px; border-left: 1px solid #888; border-right: 1px solid #aaa; background: #f4f4f4; }
.row-b { height: 21px; }
.combo { display: grid; align-items: center; height: 15px; background: #e1e1e1; }
.combo > * { grid-area: 1 / 1; }
.combo > select { padding-left: 5px; height: 15px; }
.combo > svg { width: 7px; height: 7px; justify-self: end; margin-right: 3px; pointer-events: none; }
.combo.in > select { padding-left: 14px; }
.w86 { width: 86px; } .w90 { width: 90px; } .w108 { width: 108px; } .w116 { width: 114px; } .w126 { width: 126px; } .w216 { width: 216px; }
.bar > .wide { width: 20px; }
.states { display: flex; align-items: center; gap: 2px; pointer-events: none; padding-left: 2px; }
.states svg { width: 11px; height: 11px; }
.swatch { width: 8px; height: 8px; border: 1px solid #222; background: #fff; }
.stroke { width: 44px; height: 1px; background: #222; }
.stroke.short { width: 26px; }
.layers > select { padding-left: 64px; }
.sw > select { padding-left: 13px; }
.ln > select { padding-left: 51px; }
.ls > select { padding-left: 33px; }
.serif { font-family: "Liberation Serif", "Noto Sans CJK SC", serif; }
.serif select { font-weight: bold; }
.combo.off { background: #c9c9c9; color: #777; }
.off select { font-weight: normal; }
.off > svg { stroke: #aaa; }

.work { display: flex; flex: 1; min-height: 0; gap: 4px; padding-right: 3px; background: #6a6a6a; }
.vbar { width: 18px; background: #f0f0f0; align-self: flex-start; border: 1px solid #ddd; border-top: 0; }
.vbar .grip { display: block; width: 100%; height: 6px; background: repeating-linear-gradient(#4a4a4a 0 1px, #777 1px 2px); }
.vbar button { width: 16px; height: 16px; }
.vbar i { display: block; height: 1px; margin: 2px 1px; background: #aaa; }
.right { display: flex; flex-direction: column; gap: 2px; overflow: hidden; }
.right .vbar { width: 17px; border-right: 0; flex: none; }
.frame { flex: 1; min-width: 0; display: grid; grid-template: 1fr 12px / 1fr 12px; border: 1px solid #aaa; margin-bottom: 2px; }
.view { position: relative; background: #000; overflow: hidden; }
.scene, .marks { position: absolute; inset: 0; width: 100%; height: 100%; stroke-width: 1; }
.marks { stroke: #850018; stroke-width: 4; stroke-linecap: round; pointer-events: none; }
.face { fill: #444; stroke: none; font-size: 13px; }
.f8 { font-size: 9px; } .f6 { font-size: 7px; }
.dir { fill: #aaa; stroke: none; font-size: 9px; }
.d7 { font-size: 6px; }
.viewlabel { position: absolute; left: 3px; top: 3px; color: #ddd; }
.ucs { position: absolute; right: 25px; top: 91px; width: 42px; height: 12px; border-radius: 3px; background: #9292a0; color: #555; font-size: 8px; gap: 3px; border: 1px solid #7d7d88; }
.ucs svg { width: 6px; height: 6px; stroke: #ccc; }
.float { position: absolute; left: 25px; top: 15px; height: 18px; display: flex; align-items: center; background: #f0f0f0; border: 1px solid #777; border-left: 0; }
.float button { width: 17px; height: 16px; }
.float .hot { background: #cfe5f4; }
.float .grip { width: 6px; }
.float .close { width: 6px; height: 16px; background: #555; align-items: flex-start; padding-top: 3px; }
.close svg { width: 5px; height: 5px; }
.tip { position: absolute; left: 143px; top: 42px; width: 98px; padding: 4px 4px 5px; background: #f2f3f8; border: 1px solid #8b8b93; color: #484848; white-space: nowrap; }
.tip strong { display: block; }
.tip p { margin-top: 5px; color: #6a6a6a; }
.tip hr { border: 0; border-top: 1px solid #c4c4cc; margin: 5px -4px 4px; }
.tip .cmd { display: flex; align-items: center; gap: 3px; margin-bottom: 6px; }
.tip .cmd svg { width: 12px; height: 12px; }
.vscroll { display: flex; flex-direction: column; align-items: center; background: #f0f0f0; padding: 4px 0 2px; }
.vscroll svg { width: 7px; height: 7px; }
.vscroll span { width: 11px; height: 13px; background: #cdcdcd; margin: auto 0 6px; }
.up { transform: rotate(180deg); }
.tabs { grid-column: 1 / 3; display: flex; background: #f0f0f0; color: #111; }
.nav { width: 10px; border-right: 1px solid #bbb; }
.nav svg { width: 7px; height: 7px; }
.flip svg { transform: rotate(180deg); }
.tab { padding: 0 7px 0 4px; background: linear-gradient(115deg, transparent 90%, #666 90% 92%, transparent 92%); }
.tab.on { padding: 0 7px; background: #000; color: #fff; clip-path: polygon(0 0, 100% 0, 88% 100%, 12% 100%); font-weight: bold; margin-left: 2px; }
.hscroll { margin-left: auto; width: 35%; display: flex; align-items: center; border-left: 4px solid #c4c4c4; padding: 0 14px 0 8px; }
.hscroll svg { width: 7px; height: 7px; stroke-width: 2; }
.hscroll span { width: 14px; height: 11px; background: #cdcdcd; margin: 0 auto 0 52%; }
.prev { transform: rotate(90deg); }
.next { transform: rotate(-90deg); }

.command { flex: none; display: grid; grid-template: 29px 14px / 12px 1fr; background: #c8c8c8; border-top: 1px solid #444; font: 10px/12px "Noto Sans Mono CJK SC", "DejaVu Sans Mono", "Noto Sans CJK SC", monospace; }
.command .grip { grid-row: 1 / 3; width: 12px; background: #b5b5b5; border: 1px solid #999; }
.lines { padding-left: 1px; }
.prompt { display: flex; align-items: center; gap: 4px; background: #fff; padding-left: 1px; }
.prompt input { flex: 1; }

.status { flex: none; display: flex; height: 16px; background: linear-gradient(#8f8f8f, #777); border-top: 1px solid #555; }
.coords { width: 159px; padding: 2px 0 0 8px; font: 9px/12px "Noto Sans Mono CJK SC", "Liberation Mono", monospace; color: #111; }
.status button { width: 16px; background: linear-gradient(#bcbcbc, #999); border-left: 1px solid #808080; }
.status .on { background: #b4dbe6; }
.space { display: flex; margin: 0 200px 0 auto; }
.space button { width: 20px; color: #111; }

.taskbar { flex: none; display: flex; height: 29px; background: #04191f; }
.start { width: 35px; }
.start svg { width: 14px; height: 14px; }
.find { display: flex; align-items: center; gap: 6px; width: 254px; background: #f2f2f2; padding: 0 9px 0 6px; font-size: 10px; }
.find input { flex: 1; }
.find input::placeholder { color: #444; opacity: 1; }
.find .ring { width: 17px; height: 17px; }
.app { width: 30px; margin-left: 6px; border-bottom: 2px solid #8ed0d4; padding-top: 2px; }
.app svg { width: 20px; height: 16px; }
.app.big { width: 35px; margin-left: 0; background: #36444a; }
.app.big + .app { margin-left: 4px; }

.ghost { position: absolute; right: 200px; bottom: 18px; width: 34px; overflow: hidden; color: #eeec; font-family: "Liberation Sans", sans-serif; pointer-events: none; }
.ghost b { display: block; font-size: 40px; line-height: 36px; text-shadow: 0 0 1px #888; }
.ghost span { display: block; font-size: 22px; line-height: 28px; }
.paw { position: absolute; right: 128px; bottom: 95px; width: 32px; height: 12px; fill: #f4f4f4; stroke: #bbb; stroke-width: 1; }
.brand { position: absolute; right: 0; bottom: 0; width: 200px; height: 95px; display: flex; align-items: center; gap: 8px; padding-left: 10px; background: #223056; color: #d4d4d4; }
.brand svg { width: 47px; height: 67px; }
.name { display: flex; align-items: center; gap: 1px; font-size: 27px; line-height: 34px; white-space: nowrap; }
.name span { font: 35px/34px Roboto, sans-serif; }
.site { font: 300 24px/24px Inter, sans-serif; }
```
FILE: grid.js
```js
// Projected ground grid: two families of parallel lines through the UCS origin.
const origin = { x: 99, y: 420 };
const reach = 2400;
const paths = { minor: "", major: "" };
for (let k = -90; k <= 90; k++) {
  const kind = k % 5 === 0 ? "major" : "minor";
  const y = origin.y + 20 * k;
  paths[kind] += `M${origin.x - reach} ${y - 0.323 * reach}L${origin.x + reach} ${y + 0.323 * reach}`;
  const x = origin.x + 34.8 * k;
  paths[kind] += `M${x + 0.967 * reach} ${origin.y - reach}L${x - 0.967 * reach} ${origin.y + reach}`;
}
for (const kind in paths) document.getElementById(kind).setAttribute("d", paths[kind]);
```
